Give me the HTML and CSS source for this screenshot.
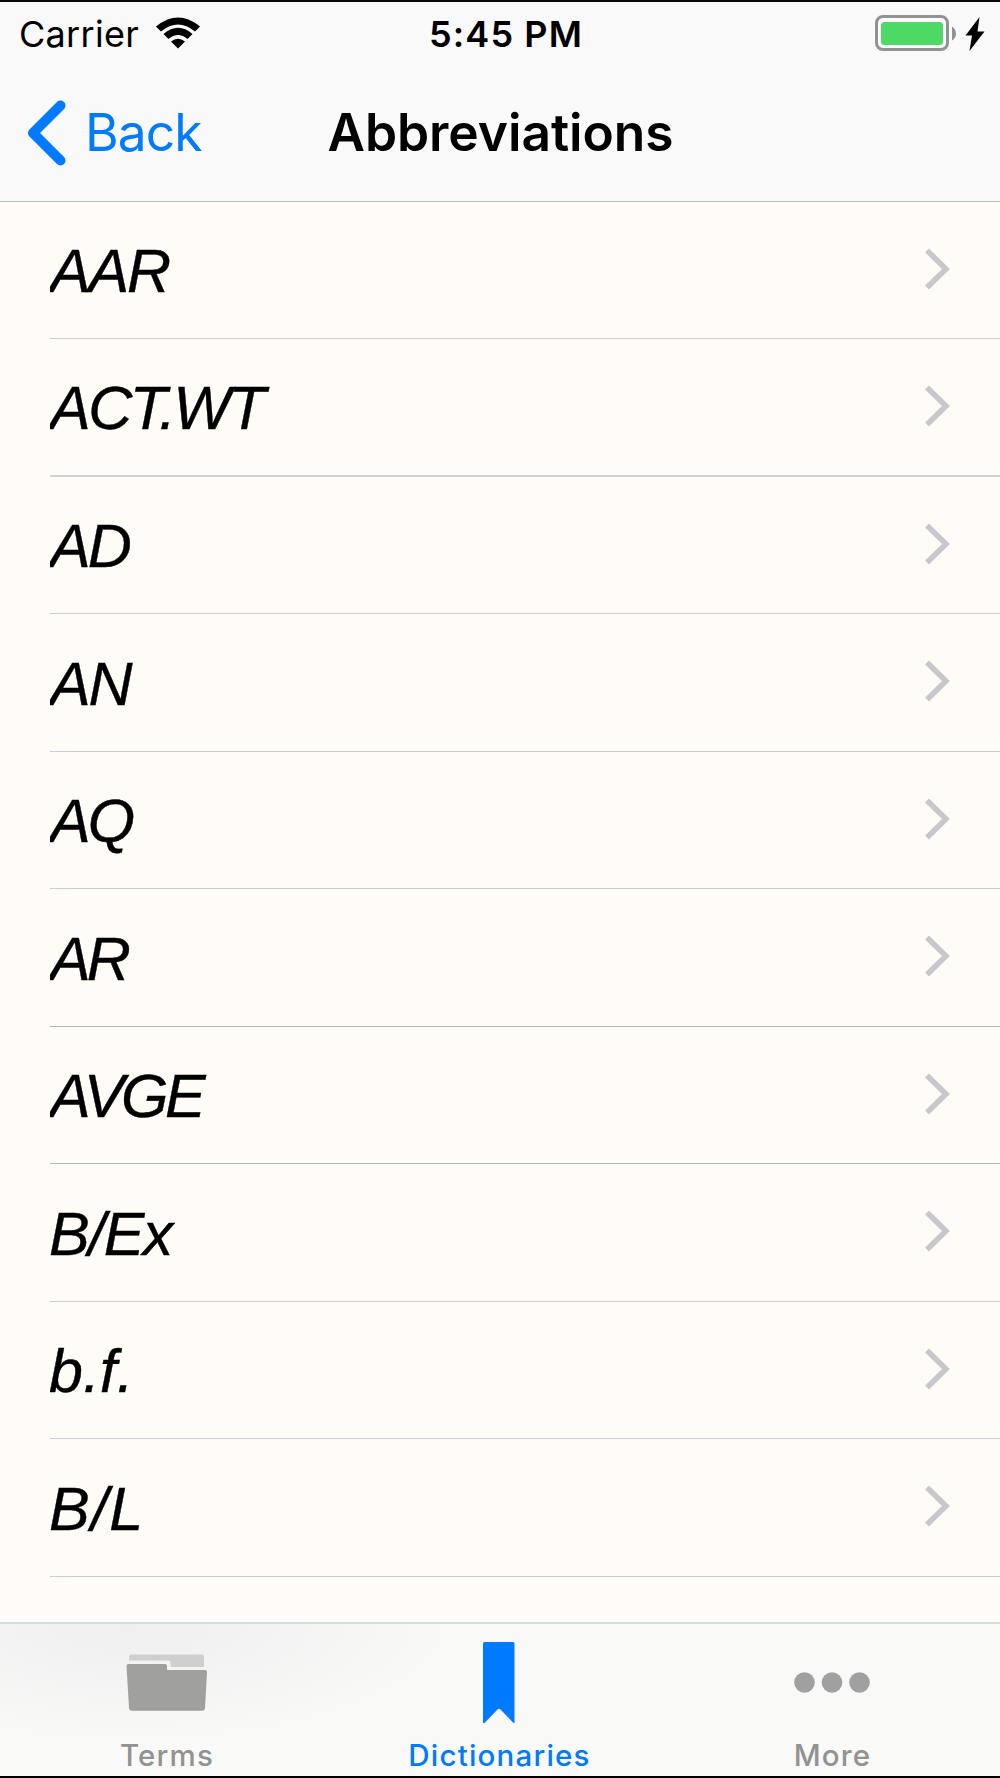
FILE: index.html
```html
<!DOCTYPE html>
<html lang="en">
<head>
<meta charset="utf-8">
<title>Abbreviations</title>
<link rel="stylesheet" href="styles.css">
</head>
<body>
<div class="screen">
  <header class="header">
    <div class="status">
      <div class="status-left">
        <span class="carrier">Carrier</span>
        <svg class="wifi" width="46" height="34" viewBox="0 0 46 34">
          <path d="M1 9.500Q23-8.500 45 9.500L40 14.500Q23 .5 6 14.500Z"/>
          <path d="M8.500 17Q23 4.500 37.500 17L32.500 22Q23 14 13.500 22Z"/>
          <path d="M16 24.500Q23 19 30 24.500L23 31.500Z"/>
        </svg>
      </div>
      <span class="time">5:45 PM</span>
      <div class="status-right">
        <svg width="112" height="38" viewBox="0 0 112 38">
          <rect x="1.500" y="2.500" width="71" height="33" rx="6.500" fill="#fff" stroke="#929292" stroke-width="3"/>
          <rect x="6" y="8" width="62" height="23" rx="3.500" fill="#4cd964"/>
          <path d="M77 12.500Q81 15 81 19.500Q81 24 77 26.500Z" fill="#929292"/>
          <path d="M104.500 3L90.500 21.500H97L94.500 37L109.500 17.500H102.500Z" fill="#000"/>
        </svg>
      </div>
    </div>
    <nav class="nav">
      <a class="back">
        <svg width="40" height="66" viewBox="0 0 40 66"><path d="M33.500 5.500L6 33L33.500 60.500" fill="none" stroke="#007aff" stroke-width="10" stroke-linecap="round" stroke-linejoin="round"/></svg>
        <span class="back-label">Back</span>
      </a>
      <h1 class="title">Abbreviations</h1>
    </nav>
  </header>
  <main class="list">
    <div class="row"><span class="term aar">AAR</span><svg class="chevron" viewBox="0 0 25 42"><path d="M2 2.500L21 21L2 39.500"/></svg></div>
    <div class="row thick"><span class="term act">ACT.WT</span><svg class="chevron" viewBox="0 0 25 42"><path d="M2 2.500L21 21L2 39.500"/></svg></div>
    <div class="row"><span class="term pair">AD</span><svg class="chevron" viewBox="0 0 25 42"><path d="M2 2.500L21 21L2 39.500"/></svg></div>
    <div class="row"><span class="term an">AN</span><svg class="chevron" viewBox="0 0 25 42"><path d="M2 2.500L21 21L2 39.500"/></svg></div>
    <div class="row"><span class="term pair">AQ</span><svg class="chevron" viewBox="0 0 25 42"><path d="M2 2.500L21 21L2 39.500"/></svg></div>
    <div class="row dark"><span class="term ar">AR</span><svg class="chevron" viewBox="0 0 25 42"><path d="M2 2.500L21 21L2 39.500"/></svg></div>
    <div class="row dark"><span class="term avge">AVGE</span><svg class="chevron" viewBox="0 0 25 42"><path d="M2 2.500L21 21L2 39.500"/></svg></div>
    <div class="row"><span class="term bex">B/Ex</span><svg class="chevron" viewBox="0 0 25 42"><path d="M2 2.500L21 21L2 39.500"/></svg></div>
    <div class="row"><span class="term bf">b.f.</span><svg class="chevron" viewBox="0 0 25 42"><path d="M2 2.500L21 21L2 39.500"/></svg></div>
    <div class="row"><span class="term bl">B/L</span><svg class="chevron" viewBox="0 0 25 42"><path d="M2 2.500L21 21L2 39.500"/></svg></div>
  </main>
  <footer class="tabs">
    <a class="tab">
      <svg class="icon" width="82" height="82" viewBox="0 0 82 82">
        <path d="M3 14.500a2 2 0 0 1 2-2H76a2 2 0 0 1 2 2V25H44.500V21a2.500 2.500 0 0 0-2.500-2.500H3Z" fill="#cfcfce"/>
        <path d="M2.500 22H39a2 2 0 0 1 2 2v4H79a2 2 0 0 1 2 2.200L79 66a3 3 0 0 1-3 2.800H6A3 3 0 0 1 3 66L.5 24a2 2 0 0 1 2-2Z" fill="#a0a09f"/>
      </svg>
      <span class="tab-label">Terms</span>
    </a>
    <a class="tab active">
      <svg class="icon" width="32" height="82" viewBox="0 0 32 82"><path d="M0 1.500Q0 0 1.500 0H30Q31.500 0 31.500 1.500V81H30.500L17.500 67.500Q16 66 14.500 67.500L1.500 81H0Z" fill="#007aff"/></svg>
      <span class="tab-label">Dictionaries</span>
    </a>
    <a class="tab last">
      <svg class="icon" width="76" height="82" viewBox="0 0 76 82" fill="#a0a0a0"><circle cx="10.500" cy="40.500" r="10.300"/><circle cx="38" cy="40.500" r="10.300"/><circle cx="65.500" cy="40.500" r="10.300"/></svg>
      <span class="tab-label">More</span>
    </a>
  </footer>
</div>
</body>
</html>
```
FILE: styles.css
```css
* { box-sizing: border-box; }
body { margin: 0; background: #fffcf7; color: #000; font-family: Inter, sans-serif; }
.screen { width: 1000px; height: 1778px; display: flex; flex-direction: column; overflow: hidden; border-top: 2px solid #0a0808; border-bottom: 2px solid #000; }
.header { flex: none; height: 199.5px; background: #f9f9f9; border-bottom: 1px solid #bebebd; }
.status { height: 64px; display: grid; grid-template-columns: 1fr auto 1fr; align-items: center; font-size: 36px; line-height: 64px; }
.status-left { display: flex; align-items: center; padding-left: 19px; gap: 16px; }
.carrier { letter-spacing: 0.300px; }
.wifi { margin-top: -1px; }
.time { font-weight: 600; padding-left: 12px; letter-spacing: 1.100px; }
.status-right { display: flex; justify-content: flex-end; padding-right: 13px; margin-top: -3px; }
.status-right svg { display: block; }
.nav { height: 132px; display: grid; grid-template-columns: 1fr auto 1fr; align-items: center; line-height: 132px; font-size: 51.500px; }
.back { display: flex; align-items: center; padding-left: 27px; gap: 18px; color: #007aff; }
.back svg { margin-top: 2px; }
.back-label { letter-spacing: -0.900px; }
.title { margin: 0; font-size: inherit; font-weight: 600; letter-spacing: -0.050px; padding-left: 1px; }
.list { flex: 1; background: #fffcf7; }
.row { height: 137.5px; margin-left: 50px; padding-right: 50px; display: flex; align-items: center; justify-content: space-between; border-bottom: 1px solid #cecdd2; }
.row.thick { border-bottom: 2px solid #d0cfd5; }
.row.dark { border-bottom-color: #b9b9bd; }
.term { font: italic 61px/133px "Liberation Sans", Arial, sans-serif; overflow: hidden; padding: 4px 12px 0 0; white-space: pre; -webkit-text-stroke: 0.400px #000; }
.aar { letter-spacing: -2.200px; }
.act { letter-spacing: -2.500px; }
.pair { letter-spacing: -3px; }
.an { letter-spacing: -2.200px; }
.ar { letter-spacing: -4px; }
.avge { letter-spacing: -3.500px; }
.bex { letter-spacing: -1.500px; text-indent: -1px; }
.bf { text-indent: -1px; }
.bl { letter-spacing: 1.300px; text-indent: -1px; }
.chevron { width: 25px; height: 42px; fill: none; stroke: #c7c7cc; stroke-width: 5.5; margin-top: -2px; }
.tabs { flex: none; height: 154px; display: grid; grid-template-columns: 333px 332px 1fr; border-top: 2px solid #dadad6; background: radial-gradient(ellipse 330px 120px at 130px 0, #efefef, #f9f9f8); }
.tab { display: flex; flex-direction: column; align-items: center; padding-top: 18px; color: #929292; }
.last { padding-right: 1px; }
.icon { display: block; }
.tab-label { font-size: 29.500px; line-height: 36px; margin-top: 13px; font-weight: 500; letter-spacing: 1.200px; padding-left: 1px; }
.active { color: #007aff; }
```
